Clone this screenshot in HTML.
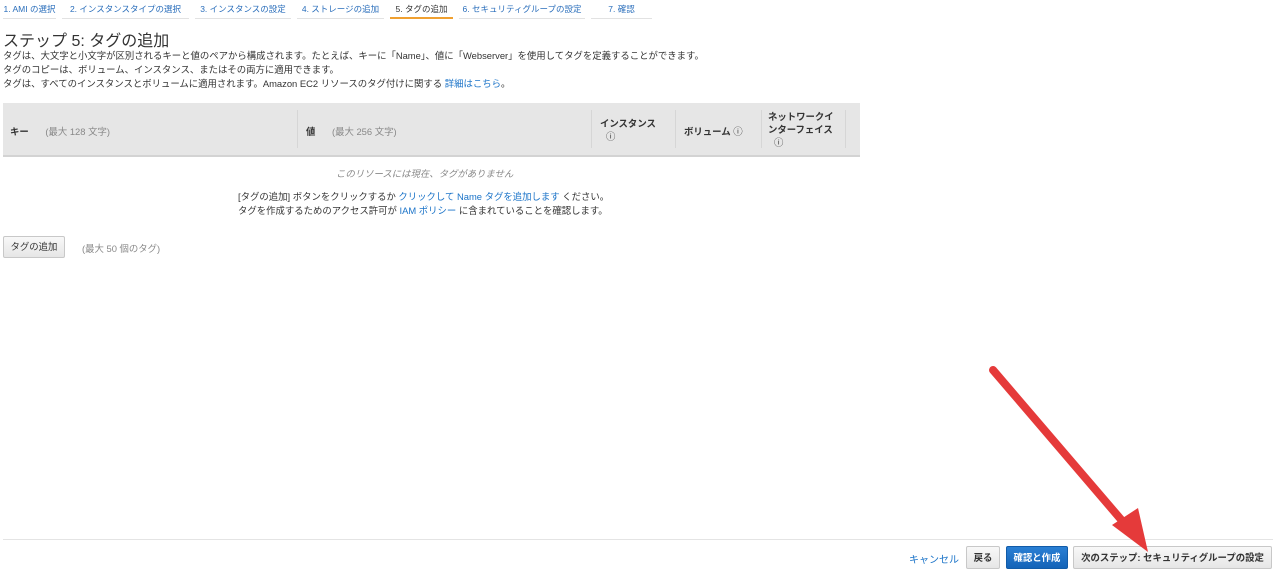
<!DOCTYPE html><html><head><meta charset="utf-8"><style>
body{margin:0;width:1280px;height:575px;background:#fff;font-family:"Liberation Sans","Noto Sans CJK JP",sans-serif;color:#333;position:relative;overflow:hidden;font-size:9.4px}
.a{position:absolute;white-space:nowrap}
.tab{position:absolute;top:0;height:18px;border-bottom:1px solid #e2e2e2;color:#2a6ebb;font-size:8.5px;line-height:18px;text-align:center;white-space:nowrap}
.tab.on{color:#333;border-bottom:2px solid #f0a030;height:17px}
.lnk{color:#1a73c8}
.g{color:#888}
.btn{position:absolute;border:1px solid #c8c8c8;border-radius:2px;background:linear-gradient(#f8f8f8,#e6e6e6);font-size:9.4px;text-align:center;color:#333;font-weight:bold;white-space:nowrap}
.vl{position:absolute;top:110px;width:1px;height:38px;background:#d6d6d6}
</style></head><body>
<div class="tab" style="left:3px;width:53px">1. AMI の選択</div>
<div class="tab" style="left:62px;width:127px">2. インスタンスタイプの選択</div>
<div class="tab" style="left:195px;width:96px">3. インスタンスの設定</div>
<div class="tab" style="left:297px;width:87px">4. ストレージの追加</div>
<div class="tab on" style="left:390px;width:63px">5. タグの追加</div>
<div class="tab" style="left:459px;width:126px">6. セキュリティグループの設定</div>
<div class="tab" style="left:591px;width:61px">7. 確認</div>
<div class="a" style="left:3px;top:27px;font-size:16px">ステップ 5: タグの追加</div>
<div class="a" style="left:3px;top:48px">タグは、大文字と小文字が区別されるキーと値のペアから構成されます。たとえば、キーに「Name」、値に「Webserver」を使用してタグを定義することができます。</div>
<div class="a" style="left:3px;top:62px">タグのコピーは、ボリューム、インスタンス、またはその両方に適用できます。</div>
<div class="a" style="left:3px;top:76px">タグは、すべてのインスタンスとボリュームに適用されます。Amazon EC2 リソースのタグ付けに関する <span class="lnk">詳細はこちら</span>。</div>
<div class="a" style="left:3px;top:103px;width:857px;height:52px;background:#e6e6e6;border-bottom:2px solid #d3d3d3"></div>
<div class="vl" style="left:297px"></div><div class="vl" style="left:591px"></div><div class="vl" style="left:675px"></div><div class="vl" style="left:761px"></div><div class="vl" style="left:845px"></div>
<div class="a" style="left:10px;top:124px;font-weight:bold">キー <span class="g" style="font-weight:normal;margin-left:14px">(最大 128 文字)</span></div>
<div class="a" style="left:306px;top:124px;font-weight:bold">値 <span class="g" style="font-weight:normal;margin-left:14px">(最大 256 文字)</span></div>
<div class="a" style="left:600px;top:117px;font-weight:bold;line-height:13px">インスタンス<br><span style="font-weight:normal;margin-left:6px">ⓘ</span></div>
<div class="a" style="left:684px;top:124px;font-weight:bold">ボリューム <span style="font-weight:normal">ⓘ</span></div>
<div class="a" style="left:768px;top:110px;font-weight:bold;line-height:13px">ネットワークイ<br>ンターフェイス<br><span style="font-weight:normal;margin-left:6px">ⓘ</span></div>
<div class="a g" style="left:336px;top:166px;font-style:italic">このリソースには現在、タグがありません</div>
<div class="a" style="left:238px;top:189px">[タグの追加] ボタンをクリックするか <span class="lnk">クリックして Name タグを追加します</span> ください。</div>
<div class="a" style="left:238px;top:203px">タグを作成するためのアクセス許可が <span class="lnk">IAM ポリシー</span> に含まれていることを確認します。</div>
<div class="btn" style="left:3px;top:236px;width:60px;height:20px;line-height:20px;font-weight:normal">タグの追加</div>
<div class="a g" style="left:82px;top:241px">(最大 50 個のタグ)</div>
<div class="a" style="left:3px;top:539px;width:1270px;height:1px;background:#e4e4e4"></div>
<div class="a lnk" style="left:909px;top:551px;font-size:10px">キャンセル</div>
<div class="btn" style="left:966px;top:546px;width:32px;height:21px;line-height:21px">戻る</div>
<div class="btn" style="left:1006px;top:546px;width:60px;height:21px;line-height:21px;background:linear-gradient(#2a7fd4,#1363b8);border-color:#115ba8;color:#fff">確認と作成</div>
<div class="btn" style="left:1073px;top:546px;width:197px;height:21px;line-height:21px">次のステップ: セキュリティグループの設定</div>
<svg class="a" style="left:0;top:0" width="1280" height="575"><line x1="993" y1="370" x2="1130" y2="530" stroke="#e53a3a" stroke-width="8" stroke-linecap="round"/><polygon points="1148,552 1112,525 1138,508" fill="#e53a3a"/></svg>
</body></html>
